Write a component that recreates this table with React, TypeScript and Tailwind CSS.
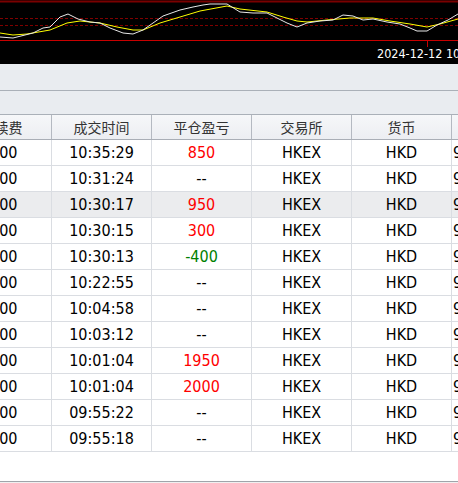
import React from "react";

type Trade = {
  fee: string;
  time: string;
  pnl: string;
  tone?: "up" | "down";
};

const trades: Trade[] = [
  { fee: "0.00", time: "10:35:29", pnl: "850", tone: "up" },
  { fee: "0.00", time: "10:31:24", pnl: "--" },
  { fee: "0.00", time: "10:30:17", pnl: "950", tone: "up" },
  { fee: "0.00", time: "10:30:15", pnl: "300", tone: "up" },
  { fee: "0.00", time: "10:30:13", pnl: "-400", tone: "down" },
  { fee: "0.00", time: "10:22:55", pnl: "--" },
  { fee: "0.00", time: "10:04:58", pnl: "--" },
  { fee: "0.00", time: "10:03:12", pnl: "--" },
  { fee: "0.00", time: "10:01:04", pnl: "1950", tone: "up" },
  { fee: "0.00", time: "10:01:04", pnl: "2000", tone: "up" },
  { fee: "0.00", time: "09:55:22", pnl: "--" },
  { fee: "0.00", time: "09:55:18", pnl: "--" },
];

const headers = ["手续费", "成交时间", "平仓盈亏", "交易所", "货币"];

const whiteLine =
  "0,37 13,38 33,33 43,28 50,27 60,17 68,14 78,19 90,22 100,23 110,28 123,33 133,34 143,30 153,23 163,16 180,10 193,7 203,5 210,4 227,4 240,12 253,13 267,13 277,18 287,23 297,27 307,23 320,21 333,20 343,15 353,16 363,20 373,19 387,22 400,24 410,28 417,31 427,31 437,25 448,20 458,14";

const yellowLine =
  "0,33 13,35 27,34 50,30 67,23 80,21 100,23 117,27 133,30 143,30 160,23 180,17 200,11 227,6 240,9 267,12 283,17 297,21 307,22 327,20 350,18 373,18 390,21 410,24 427,27 440,24 458,19";

const Chart = () => (
  <div className="relative h-[64px] bg-black overflow-hidden">
    <svg width="458" height="64" className="absolute left-0 top-0">
      <line x1="0" y1="1.5" x2="458" y2="1.5" stroke="#7a0000" strokeWidth="2" />
      <line x1="0" y1="18.5" x2="458" y2="18.5" stroke="#800000" strokeDasharray="3 2" />
      <line x1="0" y1="25.5" x2="458" y2="25.5" stroke="#800000" strokeDasharray="3 2" />
      <polyline points={yellowLine} fill="none" stroke="#ffff00" strokeWidth="1" />
      <polyline points={whiteLine} fill="none" stroke="#e8e8e8" strokeWidth="1" />
      <line x1="0" y1="40.5" x2="458" y2="40.5" stroke="#c80000" strokeWidth="1" />
      <line x1="427.5" y1="41" x2="427.5" y2="47" stroke="#c80000" strokeWidth="1" />
    </svg>
    <div className="absolute left-[377px] top-[47px] whitespace-nowrap text-[12.5px] leading-[14px] text-white font-['DejaVu_Sans_Condensed','DejaVu_Sans',sans-serif] font-stretch-condensed">
      2024-12-12 10:35:29
    </div>
  </div>
);

export default function App() {
  return (
    <div className="w-[458px] h-[483px] overflow-hidden bg-white flex flex-col">
      <Chart />
      <div className="h-[27px] shrink-0 bg-[#e9ecf0] border-b border-[#aab0b8]" />
      <div className="h-[24px] shrink-0 bg-[#e9ecf0] border-b border-[#aab0b8]" />

      <div className="flex ml-[-48px] h-[25px] shrink-0 bg-gradient-to-b from-[#f6f7f9] to-[#eceef2] border-b border-[#a9aeb6]">
        {headers.map((h) => (
          <div
            key={h}
            className="w-[100px] shrink-0 border-r border-[#b4b9c1] flex items-center justify-center text-[14px] text-[#333] font-['Noto_Sans_CJK_SC',sans-serif]"
          >
            {h}
          </div>
        ))}
        <div className="w-[100px] shrink-0" />
      </div>

      <div className="flex flex-col font-['DejaVu_Sans_Condensed','DejaVu_Sans',sans-serif] font-stretch-condensed text-[16px] text-black">
        {trades.map((t, i) => (
          <div
            key={i}
            className={`flex ml-[-48px] h-[26px] shrink-0 border-b border-[#dadde2] ${
              i === 2 ? "bg-[#ebecee]" : "bg-white"
            }`}
          >
            <div className="w-[100px] shrink-0 border-r border-[#dadde2] flex items-center justify-center">
              {t.fee}
            </div>
            <div className="w-[100px] shrink-0 border-r border-[#dadde2] flex items-center justify-center">
              {t.time}
            </div>
            <div
              className={`w-[100px] shrink-0 border-r border-[#dadde2] flex items-center justify-center ${
                t.tone === "up" ? "text-[#ff0000]" : t.tone === "down" ? "text-[#008000]" : ""
              }`}
            >
              {t.pnl}
            </div>
            <div className="w-[100px] shrink-0 border-r border-[#dadde2] flex items-center justify-center">
              HKEX
            </div>
            <div className="w-[100px] shrink-0 border-r border-[#dadde2] flex items-center justify-center">
              HKD
            </div>
            <div className="w-[100px] shrink-0 flex items-center pl-[1px]">9,650</div>
          </div>
        ))}
      </div>

      <div className="h-[29px] shrink-0 bg-white" />
      <div className="h-[1px] shrink-0 bg-[#a0a4aa]" />
      <div className="flex-1 bg-[#f0f0f0]" />
    </div>
  );
}
